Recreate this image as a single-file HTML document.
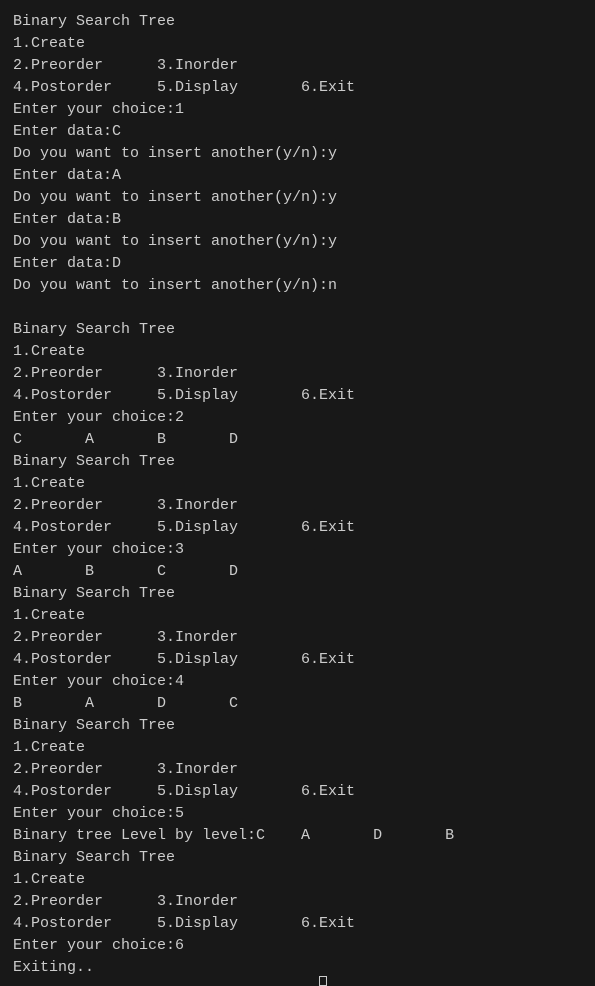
<!DOCTYPE html>
<html><head><style>
html,body{margin:0;padding:0;background:#181818;width:595px;height:983px;overflow:hidden}
pre{margin:0;padding:11px 0 0 13px;font-family:"Liberation Mono",monospace;font-size:15px;line-height:22px;color:#cccccc;tab-size:8}
.cur{position:absolute;left:319px;top:976px;width:8px;height:10px;border:1px solid #ccc;box-sizing:border-box}
</style></head><body>
<pre>Binary Search Tree
1.Create
2.Preorder	3.Inorder
4.Postorder	5.Display	6.Exit
Enter your choice:1
Enter data:C
Do you want to insert another(y/n):y
Enter data:A
Do you want to insert another(y/n):y
Enter data:B
Do you want to insert another(y/n):y
Enter data:D
Do you want to insert another(y/n):n

Binary Search Tree
1.Create
2.Preorder	3.Inorder
4.Postorder	5.Display	6.Exit
Enter your choice:2
C	A	B	D
Binary Search Tree
1.Create
2.Preorder	3.Inorder
4.Postorder	5.Display	6.Exit
Enter your choice:3
A	B	C	D
Binary Search Tree
1.Create
2.Preorder	3.Inorder
4.Postorder	5.Display	6.Exit
Enter your choice:4
B	A	D	C
Binary Search Tree
1.Create
2.Preorder	3.Inorder
4.Postorder	5.Display	6.Exit
Enter your choice:5
Binary tree Level by level:C	A	D	B
Binary Search Tree
1.Create
2.Preorder	3.Inorder
4.Postorder	5.Display	6.Exit
Enter your choice:6
Exiting..
</pre>
<div class="cur"></div>
</body></html>
